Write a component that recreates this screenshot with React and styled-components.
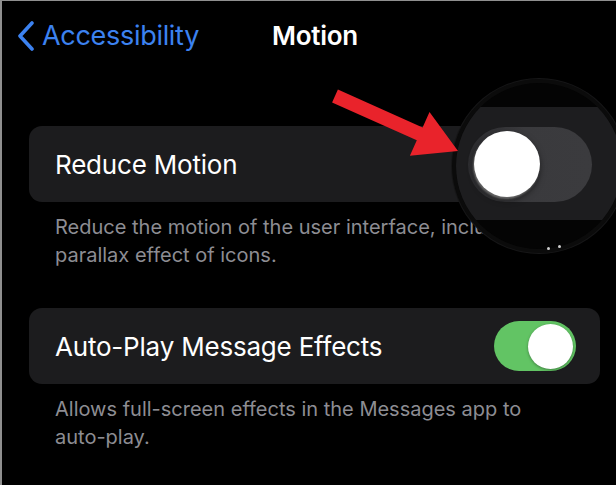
import * as React from 'react';
import styled, { createGlobalStyle } from 'styled-components';

const GlobalStyle = createGlobalStyle`
    html, body {
        margin:0;
        padding:0;
        background:#000;
    }
    * {
        box-sizing:border-box;
    }
`;

const Screen = styled.div`
    position:relative;
    width:616px;
    height:485px;
    overflow:hidden;
    background:#000;
    border-left:2px solid #8f8f8f;
    border-top:1px solid #8f8f8f;
    font-family:Inter, "Noto Sans", sans-serif;
    color:#fff;
`;

const NavBar = styled.div`
    display:flex;
    align-items:center;
    height:69px;
    padding-left:14px;
`;

const BackButton = styled.div`
    display:flex;
    align-items:center;
    gap:7px;
    color:#3c82f0;
    font-size:27px;
    letter-spacing:-0.3px;
`;

const Title = styled.div`
    margin-left:73px;
    font-size:26px;
    font-weight:600;
    letter-spacing:-0.3px;
`;

const Content = styled.div`
    display:flex;
    flex-direction:column;
    padding:56px 16px 0 27px;
`;

const Group = styled.section`
    display:flex;
    flex-direction:column;
    & + & {
        margin-top:39px;
    }
`;

const Card = styled.div`
    display:flex;
    align-items:center;
    justify-content:space-between;
    height:76px;
    padding:0 24px 0 26px;
    border-radius:13px;
    background:#1c1c1e;
`;

const Label = styled.span`
    font-size:26px;
    letter-spacing:-0.2px;
`;

const Footer = styled.p`
    margin:11px 0 0 26px;
    font-size:20px;
    line-height:28px;
    color:#8d8d93;
`;

const Track = styled.div`
    display:flex;
    align-items:center;
    justify-content:${(p) => (p.$on ? 'flex-end' : 'flex-start')};
    width:82px;
    height:50px;
    padding:0 3px;
    border-radius:25px;
    background:${(p) => (p.$on ? '#62c464' : '#39393d')};
`;

const Knob = styled.div`
    width:45px;
    height:45px;
    border-radius:50%;
    background:#fff;
    box-shadow:0 1px 3px rgba(0,0,0,0.35);
`;

// lens that blows up the Reduce Motion switch
const Lens = styled.div`
    position:absolute;
    left:450px;
    top:78px;
    width:174px;
    height:174px;
    border-radius:50%;
    overflow:hidden;
    background:#040404;
    border:4px solid #0b0b0b;
    box-shadow:0 0 0 1px #161617;
`;

const LensBand = styled.div`
    position:absolute;
    left:0;
    right:0;
    top:24px;
    height:113px;
    background:#1d1d1f;
`;

const LensTrack = styled.div`
    position:absolute;
    left:12px;
    top:44px;
    width:124px;
    height:75px;
    border-radius:38px;
    background:linear-gradient(90deg, #2c2c2f 0%, #3a3a3d 45%, #3b3b3e 100%);
`;

const LensKnob = styled.div`
    position:absolute;
    left:18px;
    top:48px;
    width:66px;
    height:66px;
    border-radius:50%;
    background:#fff;
    box-shadow:-1px 2px 2px rgba(120,120,120,0.8), 0 3px 6px rgba(0,0,0,0.5);
`;

const Dot = styled.span`
    position:absolute;
    width:3px;
    height:3px;
    border-radius:50%;
    background:#cfcfcf;
`;

const Arrow = styled.svg`
    position:absolute;
    left:323px;
    top:84px;
    width:140px;
    height:75px;
    overflow:visible;
`;

const Chevron = () => (
    <svg width="19" height="30" viewBox="0 0 19 30">
        <polyline points="16,2 4,15 16,28" fill="none" stroke="#3c82f0"
            strokeWidth="3.6" strokeLinecap="round" strokeLinejoin="round" />
    </svg>
);

const Switch = ({ on }) => (
    <Track $on={on}>
        <Knob />
    </Track>
);

const settings = [
    {
        label: 'Reduce Motion',
        on: false,
        lines: ['Reduce the motion of the user interface, including the', 'parallax effect of icons.'],
    },
    {
        label: 'Auto-Play Message Effects',
        on: true,
        lines: ['Allows full-screen effects in the Messages app to', 'auto-play.'],
    },
];

export default function App() {
    return <>
        <GlobalStyle />
        <Screen>
            <NavBar>
                <BackButton>
                    <Chevron />
                    Accessibility
                </BackButton>
                <Title>Motion</Title>
            </NavBar>
            <Content>
                {settings.map((s) => (
                    <Group key={s.label}>
                        <Card>
                            <Label>{s.label}</Label>
                            <Switch on={s.on} />
                        </Card>
                        <Footer>{s.lines[0]}<br />{s.lines[1]}</Footer>
                    </Group>
                ))}
            </Content>
            <Lens>
                <LensBand />
                <LensTrack />
                <LensKnob />
            </Lens>
            <Dot style={{ left: 545, top: 246 }} />
            <Dot style={{ left: 556, top: 244 }} />
            <Arrow viewBox="325 85 140 75">
                <polygon fill="#e9232b"
                    points="337.9,89.6 422.6,127.5 429.5,112 458,151 409.9,155.8 416.8,140.3 332.1,102.4" />
            </Arrow>
        </Screen>
    </>;
}
